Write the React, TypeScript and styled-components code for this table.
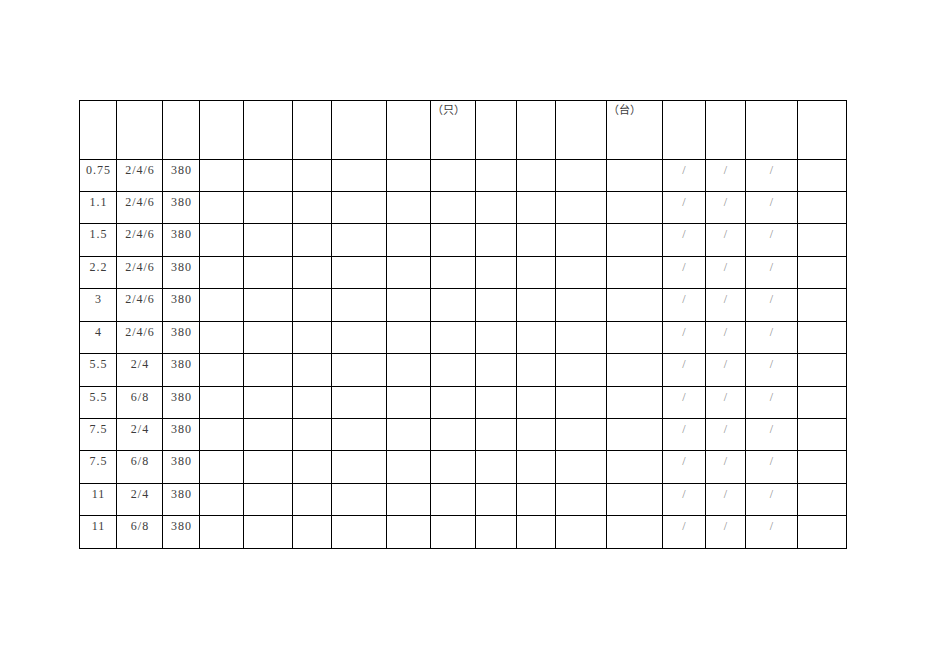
import React from 'react';
import styled, { createGlobalStyle } from 'styled-components';

const GlobalStyle = createGlobalStyle`
  html, body {
    margin: 0;
    padding: 0;
    background: #fff;
  }
  body {
    font-family: "Liberation Serif", "Noto Sans CJK SC", serif;
  }
`;

const COLS = [37, 46, 37, 44, 49, 39, 55, 44, 45, 41, 39, 51, 56, 43, 40, 52, 49];
const ROW_HEIGHTS = [32, 32, 33, 32, 33, 32, 33, 32, 32, 33, 32, 33];

const HEADERS: Record<number, string> = {
  8: '（只）',
  12: '（台）',
};

const ROWS: [string, string, string][] = [
  ['0.75', '2/4/6', '380'],
  ['1.1', '2/4/6', '380'],
  ['1.5', '2/4/6', '380'],
  ['2.2', '2/4/6', '380'],
  ['3', '2/4/6', '380'],
  ['4', '2/4/6', '380'],
  ['5.5', '2/4', '380'],
  ['5.5', '6/8', '380'],
  ['7.5', '2/4', '380'],
  ['7.5', '6/8', '380'],
  ['11', '2/4', '380'],
  ['11', '6/8', '380'],
];

const SLASH_COLS = [13, 14, 15];

const Page = styled.div`
  width: 936px;
  height: 662px;
  box-sizing: border-box;
  padding: 100px 0 0 79px;
`;

const Sheet = styled.div`
  display: grid;
  grid-template-columns: ${COLS.map((c) => `${c}px`).join(' ')};
  grid-template-rows: 59px ${ROW_HEIGHTS.map((h) => `${h}px`).join(' ')};
  width: max-content;
  border-left: 1px solid #000;
  border-top: 1px solid #000;
`;

const Cell = styled.div<{ $head?: boolean; $muted?: boolean }>`
  box-sizing: border-box;
  border-right: 1px solid #000;
  border-bottom: 1px solid #000;
  font-size: ${({ $head }) => ($head ? '11px' : '12px')};
  letter-spacing: ${({ $head }) => ($head ? '0' : '1px')};
  line-height: 13px;
  padding: ${({ $head }) => ($head ? '3px 0 0 1px' : '4px 0 0 1px')};
  text-align: ${({ $head }) => ($head ? 'left' : 'center')};
  color: ${({ $muted }) => ($muted ? '#8a8a8a' : '#3c3c3c')};
  white-space: nowrap;
  overflow: hidden;
`;

export default function App() {
  return (
    <>
      <GlobalStyle />
      <Page>
        <Sheet>
          {COLS.map((_, i) => (
            <Cell key={`h${i}`} $head>
              {HEADERS[i] || ''}
            </Cell>
          ))}
          {ROWS.map((row, r) =>
            COLS.map((_, c) => {
              const slash = SLASH_COLS.includes(c);
              return (
                <Cell key={`${r}-${c}`} $muted={slash}>
                  {c < 3 ? row[c] : slash ? '/' : ''}
                </Cell>
              );
            })
          )}
        </Sheet>
      </Page>
    </>
  );
}
